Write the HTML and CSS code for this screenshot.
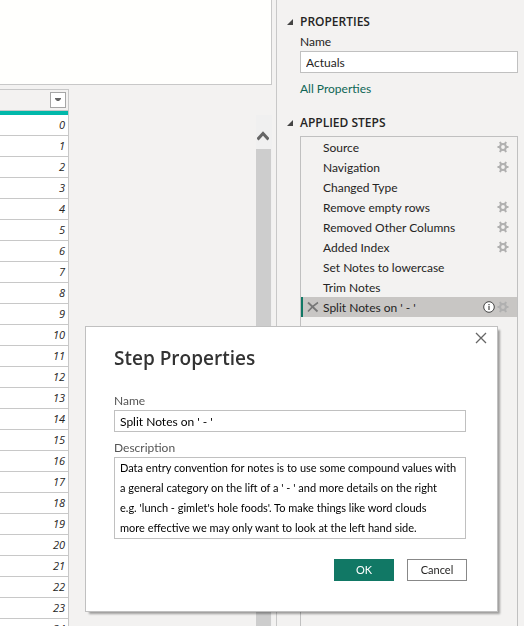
FILE: index.html
```
<!DOCTYPE html>
<html lang="en">
<head>
<meta charset="utf-8">
<title>Power Query Editor</title>
<link rel="stylesheet" href="styles.css">
</head>
<body>
<svg class="sprite" aria-hidden="true">
  <symbol id="gear" viewBox="0 0 12 12">
    <circle cx="6" cy="6" r="2.9" fill="none" stroke="currentColor" stroke-width="2"/>
    <path d="M0.500 6H3M9 6H11.500M3 0.800L4.200 3.500M9 0.800L7.800 3.500M3 11.200L4.200 8.500M9 11.200L7.800 8.500" fill="none" stroke="currentColor" stroke-width="2"/>
  </symbol>
</svg>
<div class="app">
  <main class="main">
    <div class="formula"></div>
    <div class="preview">
      <table class="grid">
        <thead><tr><th><button class="filter" aria-label="Filter column"><svg width="6" height="4" viewBox="0 0 6 4"><path d="M0 0H6V1L4 3H2L0 1Z" fill="#666"/></svg></button></th></tr></thead>
        <tbody>
          <tr><td>0</td></tr><tr><td>1</td></tr><tr><td>2</td></tr><tr><td>3</td></tr><tr><td>4</td></tr>
          <tr><td>5</td></tr><tr><td>6</td></tr><tr><td>7</td></tr><tr><td>8</td></tr><tr><td>9</td></tr>
          <tr><td>10</td></tr><tr><td>11</td></tr><tr><td>12</td></tr><tr><td>13</td></tr><tr><td>14</td></tr>
          <tr><td>15</td></tr><tr><td>16</td></tr><tr><td>17</td></tr><tr><td>18</td></tr><tr><td>19</td></tr>
          <tr><td>20</td></tr><tr><td>21</td></tr><tr><td>22</td></tr><tr><td>23</td></tr><tr><td>24</td></tr>
        </tbody>
      </table>
      <div class="scroll">
        <button class="scroll-up" aria-label="Scroll up"><svg width="12" height="10" viewBox="0 0 12 10"><path d="M0.500 8.500L6 2.500L11.500 8.500" fill="none" stroke="#666" stroke-width="3"/></svg></button>
        <div class="thumb"></div>
      </div>
    </div>
  </main>
  <aside class="settings">
    <h2 class="section"><svg class="twisty" width="6" height="6" viewBox="0 0 6 6"><path d="M6 0V6H0Z"/></svg>PROPERTIES</h2>
    <div class="props">
      <label for="query-name">Name</label>
      <input id="query-name" class="field" type="text" value="Actuals">
      <a class="link" href="#">All Properties</a>
    </div>
    <h2 class="section"><svg class="twisty" width="6" height="6" viewBox="0 0 6 6"><path d="M6 0V6H0Z"/></svg>APPLIED STEPS</h2>
    <ul class="steps">
      <li><span>Source</span><button class="gear" aria-label="Edit settings"><svg><use href="#gear"/></svg></button></li>
      <li><span>Navigation</span><button class="gear" aria-label="Edit settings"><svg><use href="#gear"/></svg></button></li>
      <li><span>Changed Type</span></li>
      <li><span>Remove empty rows</span><button class="gear" aria-label="Edit settings"><svg><use href="#gear"/></svg></button></li>
      <li><span>Removed Other Columns</span><button class="gear" aria-label="Edit settings"><svg><use href="#gear"/></svg></button></li>
      <li><span>Added Index</span><button class="gear" aria-label="Edit settings"><svg><use href="#gear"/></svg></button></li>
      <li><span>Set Notes to lowercase</span></li>
      <li><span>Trim Notes</span></li>
      <li class="selected">
        <button class="delete" aria-label="Delete step"><svg width="12" height="12" viewBox="0 0 12 12"><path d="M1 1.500L10.500 10.500" stroke="#777" stroke-width="1.800"/><path d="M11 1.500C7 4 4 7 1 10.500" fill="none" stroke="#777" stroke-width="1.500"/></svg></button>
        <span>Split Notes on ' - '</span>
        <svg class="info" width="12" height="12" viewBox="0 0 12 12"><circle cx="6" cy="6" r="5.300" fill="#fff" stroke="#444" stroke-width="1"/><path d="M6 5V9M6 3V4.200" stroke="#333" stroke-width="1.100"/></svg>
        <button class="gear" aria-label="Edit settings"><svg><use href="#gear"/></svg></button>
      </li>
    </ul>
  </aside>
</div>
<section class="dialog" role="dialog" aria-labelledby="dialog-title">
  <button class="close" aria-label="Close"><svg width="12" height="12" viewBox="0 0 12 12"><path d="M1 1L11 11M11 1L1 11" stroke="#666" stroke-width="1.300"/></svg></button>
  <h1 id="dialog-title">Step Properties</h1>
  <form class="form">
    <label for="step-name">Name</label>
    <input id="step-name" class="field" type="text" value="Split Notes on ' - '">
    <label for="step-desc">Description</label>
    <textarea id="step-desc" class="field" rows="4">Data entry convention for notes is to use some compound values with
a general category on the lift of a ' - ' and more details on the right
e.g. 'lunch - gimlet's hole foods'. To make things like word clouds
more effective we may only want to look at the left hand side.</textarea>
    <div class="actions">
      <button class="btn primary" type="button">OK</button>
      <button class="btn" type="button">Cancel</button>
    </div>
  </form>
</section>
</body>
</html>
```
FILE: styles.css
```
* { box-sizing: border-box; }

body {
  margin: 0;
  background: #f3f2f1;
  color: #252423;
  font: 12px/20px Lato, "Open Sans", sans-serif;
}

button, input, textarea { font: inherit; color: inherit; }
button { padding: 0; border: 0; background: none; }
svg { display: block; }
.sprite { position: absolute; width: 0; height: 0; }

.app {
  display: grid;
  grid-template-columns: 1fr 248px;
  height: 100vh;
  overflow: hidden;
}

.main {
  display: flex;
  flex-direction: column;
  gap: 4px;
  min-height: 0;
  padding-right: 4px;
}

.formula {
  flex: 0 0 85px;
  background: #fffffd;
  border: solid #c8c8c8;
  border-width: 0 1px 1px 0;
}

.preview {
  flex: 1;
  display: flex;
  justify-content: space-between;
  align-items: flex-start;
  min-height: 0;
  overflow: hidden;
}

.grid {
  width: 69px;
  border-collapse: separate;
  border-spacing: 0;
  border-top: 1px solid #c8c8c8;
  border-right: 1px solid #c8c8c8;
}
.grid th {
  height: 25px;
  padding: 0 2px 1px 0;
  border-bottom: 4px solid #01b8aa;
  box-shadow: inset 0 -1px #c8c8c8;
}
.filter {
  display: grid;
  place-items: center;
  width: 16px;
  height: 16px;
  margin-left: auto;
  background: #fff;
  border: 1px solid #a6a6a6;
}
.grid td {
  height: 21px;
  padding: 0 3px 0 0;
  background: #fff;
  border-bottom: 1px solid #c8c8c8;
  font: italic 11px/20px "Open Sans", sans-serif;
  text-align: right;
}

.scroll {
  align-self: stretch;
  display: flex;
  flex-direction: column;
  width: 16px;
  margin-top: 26px;
  background: #f0f0f0;
}
.scroll-up {
  display: grid;
  place-items: center;
  height: 34px;
  padding: 8px 2px 0 0;
}
.thumb { flex: 1; margin-right: 1px; background: #cdcdcd; }

.settings {
  display: flex;
  flex-direction: column;
  min-height: 0;
  padding: 12px 6px 0 23px;
  border-left: 1px solid #c8c8c8;
}
.section {
  display: flex;
  align-items: center;
  gap: 7px;
  margin: 0 0 0 -13px;
  font: 600 12px/20px "Open Sans", sans-serif;
}
.twisty { fill: #444; }
.props {
  display: flex;
  flex-direction: column;
  margin-bottom: 14px;
}
.field {
  width: 100%;
  height: 22px;
  margin: 0;
  padding: 0 5px;
  background: #fff;
  border: 1px solid #c0c0c0;
  border-radius: 0;
}
.link {
  align-self: flex-start;
  margin-top: 6px;
  color: #0e6655;
  text-decoration: none;
}
.props label { line-height: 19px; }

.steps {
  flex: 1;
  margin: 3px 0 0;
  padding: 0;
  border: 1px solid #c0c0c0;
  border-bottom: 0;
  list-style: none;
}
.steps li {
  display: flex;
  align-items: center;
  height: 20px;
  padding: 0 8px 0 22px;
}
.steps span { flex: 1; padding-top: 2px; white-space: nowrap; }
.steps .selected {
  padding-left: 4px;
  background: #c8c6c4;
  border-left: 2px solid #117865;
}
.delete { margin-right: 4px; }
.info { margin-right: 2px; }
.gear { color: #b0b0b0; }
.gear svg { width: 12px; height: 12px; }

.dialog {
  position: fixed;
  top: 326px;
  right: 26px;
  width: 413px;
  max-width: 100%;
  padding: 18px 31px 30px 28px;
  background: #fff;
  border: 1px solid #c0c0c0;
  box-shadow: 3px 3px 2px -1px rgba(0, 0, 0, 0.35);
}
.close { position: absolute; top: 5px; right: 10px; }
.dialog h1 {
  margin: 0 0 20px;
  color: #333;
  font: 600 19px/26px "Open Sans", sans-serif;
}
.form { display: flex; flex-direction: column; }
.form label { color: #555; line-height: 19px; }
.form .field { margin-bottom: 6px; color: #000; }
.form textarea.field {
  height: 82px;
  margin-bottom: 20px;
  padding-right: 0;
  font-size: 11px;
  line-height: 20px;
  resize: none;
  overflow: hidden;
}
.actions { display: flex; justify-content: flex-end; gap: 13px; margin-right: -1px; }
.btn {
  width: 60px;
  height: 22px;
  background: #fff;
  border: 1px solid #888;
  font-size: 11px;
  line-height: 20px;
}
.primary { background: #117865; border-color: #117865; color: #fff; }
```
